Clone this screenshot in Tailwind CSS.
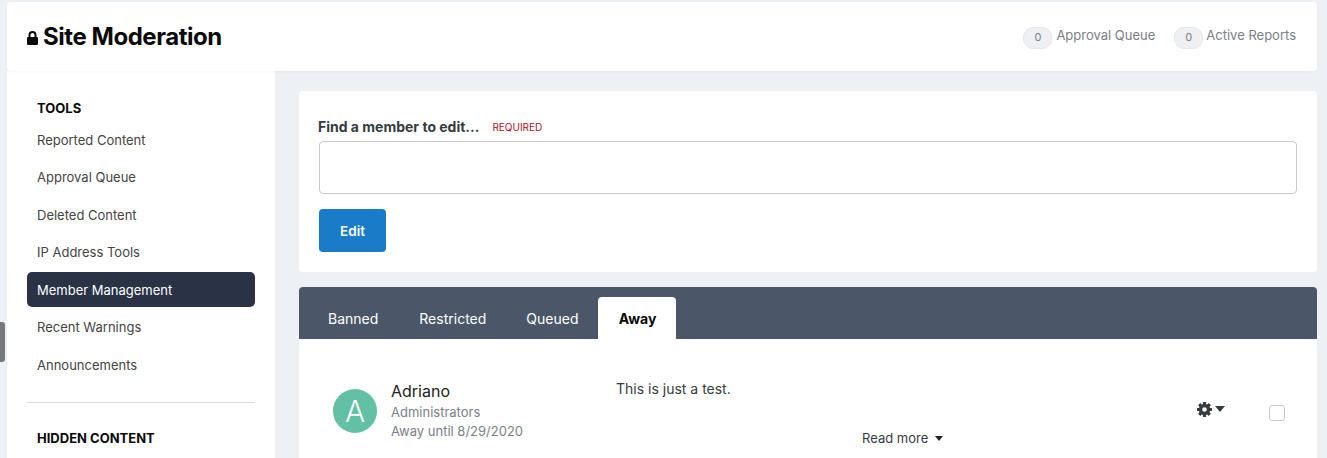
<!DOCTYPE html>
<html lang="en">
<head>
  <meta charset="UTF-8" />
  <title>Site Moderation</title>
  <script src="https://cdn.jsdelivr.net/npm/@tailwindcss/browser@4"></script>
</head>
<body class="bg-[#edf1f6] h-[458px] overflow-hidden relative font-['Inter',sans-serif] text-[13px] text-[#444]">

  <!-- Page scroll handle -->
  <div class="absolute left-0 top-[322px] w-[5px] h-[40px] bg-[#777] rounded-r-[3px]"></div>

  <div class="ml-[7px] mr-[10px] pt-[2px]">
    <!-- Header -->
    <header class="relative z-10 h-[69px] bg-white rounded-[4px] flex justify-between items-center pl-[20px] pr-[21px] shadow-[0_1px_3px_rgba(0,0,0,0.04)]">
      <h1 class="flex items-center text-[24px] leading-[30px] font-bold text-[#0a0a0a] tracking-[-0.45px]">
        <svg class="w-[11px] h-[14px] mr-[5px] mt-[3px]" viewBox="0 0 11 14" fill="#0a0a0a">
          <path fill-rule="evenodd" d="M5.5 0A4 4 0 0 1 9.5 4v2h.2A1.3 1.3 0 0 1 11 7.300v5.400A1.300 1.300 0 0 1 9.700 14H1.300A1.300 1.300 0 0 1 0 12.700V7.300A1.300 1.300 0 0 1 1.300 6h.2V4a4 4 0 0 1 4-4zM3.500 6h4V4a2 2 0 0 0-4 0z"/>
        </svg>
        Site Moderation
      </h1>
      <div class="flex items-center text-[13px] text-[#7b8089]">
        <span class="w-[29px] h-[22px] rounded-[10px] bg-[#eef0f3] border border-[#e4e6ea] flex items-center justify-center text-[11px] mr-[4px] mt-[2px]">0</span>
        <span class="mr-[19px] pb-[2px]">Approval Queue</span>
        <span class="w-[29px] h-[22px] rounded-[10px] bg-[#eef0f3] border border-[#e4e6ea] flex items-center justify-center text-[11px] mr-[3px] mt-[2px]">0</span>
        <span class="pb-[2px]">Active Reports</span>
      </div>
    </header>

    <div class="flex">
      <!-- Sidebar -->
      <aside class="w-[268px] h-[387px] bg-white px-[20px] pt-[29px] shrink-0">
        <h2 class="pl-[10px] text-[13px] leading-[16px] font-bold text-[#0a0a0a] mb-[6px]">TOOLS</h2>
        <nav class="flex flex-col gap-[2.5px]">
          <a class="h-[35px] flex items-center pl-[10px] pt-[2px]">Reported Content</a>
          <a class="h-[35px] flex items-center pl-[10px] pt-[2px]">Approval Queue</a>
          <a class="h-[35px] flex items-center pl-[10px] pt-[2px]">Deleted Content</a>
          <a class="h-[35px] flex items-center pl-[10px] pt-[2px]">IP Address Tools</a>
          <a class="h-[35px] flex items-center pl-[10px] pt-[2px] bg-[#2a3245] text-white rounded-[5px]">Member Management</a>
          <a class="h-[35px] flex items-center pl-[10px] pt-[2px]">Recent Warnings</a>
          <a class="h-[35px] flex items-center pl-[10px] pt-[2px]">Announcements</a>
        </nav>
        <hr class="border-[#d9dbde] mt-[20px] mb-[27px]" />
        <h2 class="pl-[10px] text-[13px] leading-[16px] font-bold text-[#0a0a0a]">HIDDEN CONTENT</h2>
      </aside>

      <!-- Main column -->
      <main class="flex-1 pl-[24px] pt-[20px]">
        <section class="h-[181px] bg-white rounded-[4px] px-[20px] pt-[27px]">
          <div class="flex items-center h-[16px]">
            <label class="text-[14px] font-bold text-[#353c41] -ml-[1px]">Find a member to edit...</label>
            <span class="ml-[13px] mt-[2px] text-[10px] text-[#a3121f]">REQUIRED</span>
          </div>
          <input type="text" class="block w-full h-[53px] mt-[7px] border border-[#c6c8cb] rounded-[4px] bg-white" />
          <button class="mt-[15px] w-[67px] h-[43px] pt-[2px] bg-[#1a7cc9] text-white font-semibold text-[13.500px] rounded-[4px]">Edit</button>
        </section>

        <section class="mt-[15px] bg-white rounded-t-[4px] h-[171px] overflow-hidden">
          <div class="h-[52px] bg-[#4b5768] flex items-end pl-[9px] text-[14px] text-white">
            <a class="h-[42px] pl-[20px] pr-[21px] flex items-center">Banned</a>
            <a class="h-[42px] px-[20px] flex items-center">Restricted</a>
            <a class="h-[42px] px-[20px] flex items-center">Queued</a>
            <a class="h-[42px] w-[78px] justify-center flex items-center bg-white text-[#0a0a0a] font-bold rounded-t-[4px]">Away</a>
          </div>

          <div class="flex pt-[40px] pl-[34px]">
            <div class="w-[44px] h-[44px] mt-[10px] rounded-full bg-[#62c0a4] text-white text-[30px] font-light flex items-center justify-center shrink-0">A</div>
            <div class="ml-[14px] w-[225px] shrink-0">
              <p class="text-[16px] leading-[24px] text-[#222]">Adriano</p>
              <p class="text-[13px] leading-[19px] text-[#7b8089]">Administrators</p>
              <p class="text-[13px] leading-[19px] text-[#7b8089]">Away until 8/29/2020</p>
            </div>
            <div class="w-[581px] shrink-0 -mt-[1px] relative">
              <p class="text-[14px] leading-[22px] text-[#353c41]">This is just a test.</p>
              <a class="absolute left-[246px] top-[50px] flex items-center text-[13px] leading-[20px] text-[#353c41]">Read more
                <svg class="ml-[7px] w-[8px] h-[5px]" viewBox="0 0 8 5" fill="#222"><path d="M0 0h8L4 5z"/></svg>
              </a>
            </div>
            <div class="flex items-center h-[16px] mt-[22px] shrink-0">
              <svg class="w-[15px] h-[15px]" viewBox="0 0 15 15" fill="#353c41">
                <circle cx="7.500" cy="7.500" r="4" fill="none" stroke="#353c41" stroke-width="3.400"/>
                <rect x="5.900" y="0" width="3.200" height="3" rx="0.400"/>
                <rect x="5.900" y="0" width="3.200" height="3" rx="0.400" transform="rotate(45 7.500 7.500)"/>
                <rect x="5.900" y="0" width="3.200" height="3" rx="0.400" transform="rotate(90 7.500 7.500)"/>
                <rect x="5.900" y="0" width="3.200" height="3" rx="0.400" transform="rotate(135 7.500 7.500)"/>
                <rect x="5.900" y="0" width="3.200" height="3" rx="0.400" transform="rotate(180 7.500 7.500)"/>
                <rect x="5.900" y="0" width="3.200" height="3" rx="0.400" transform="rotate(225 7.500 7.500)"/>
                <rect x="5.900" y="0" width="3.200" height="3" rx="0.400" transform="rotate(270 7.500 7.500)"/>
                <rect x="5.900" y="0" width="3.200" height="3" rx="0.400" transform="rotate(315 7.500 7.500)"/>
              </svg>
              <svg class="ml-[3px] w-[10px] h-[6px]" viewBox="0 0 10 6" fill="#353c41"><path d="M0 0h10L5 6z"/></svg>
            </div>
            <input type="checkbox" class="appearance-none block ml-[44px] mt-[26px] w-[16px] h-[16px] border border-[#c6c8cb] rounded-[3px] bg-white shrink-0" />
          </div>
        </section>
      </main>
    </div>
  </div>
</body>
</html>
